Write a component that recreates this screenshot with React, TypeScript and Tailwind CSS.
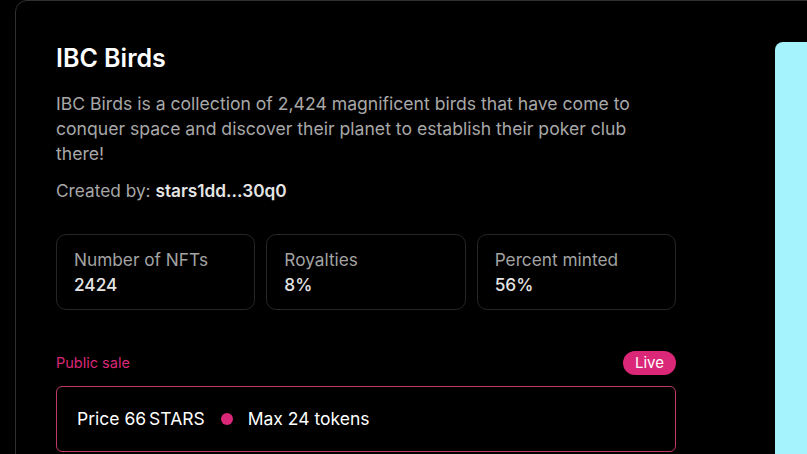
import React from "react";

function Stat({ label, value }: { label: string; value: string }) {
  return (
    <div className="border border-[#262626] rounded-[10px] px-[17px] py-3">
      <div className="text-[17.25px] leading-[25px] text-[#a3a3a3]">{label}</div>
      <div className="text-[17.25px] leading-[25px] font-medium text-[#e5e5e5]">{value}</div>
    </div>
  );
}

export default function App() {
  return (
    <div
      className="w-[807px] h-[454px] overflow-hidden bg-black"
      style={{ fontFamily: "Inter, 'Noto Sans', sans-serif" }}
    >
      <div className="ml-[15px] w-[900px] h-[600px] border border-[#303030] rounded-[12px] pl-10 pt-[41px] flex gap-[99px]">
        <div className="w-[620px] shrink-0">
          <h1 className="text-[25px] leading-8 font-semibold text-white">IBC Birds</h1>
          <p className="mt-[17px] text-[17.6px] leading-[25px] text-[#a8a8a8]">
            IBC Birds is a collection of 2,424 magnificent birds that have come to conquer space and discover their planet to establish their poker club there!
          </p>
          <div className="mt-3 text-[17.25px] leading-[25px] text-[#a8a8a8]">
            Created by: <span className="font-semibold text-[#e5e5e5]">stars1dd...30q0</span>
          </div>
          <div className="mt-[31px] grid grid-cols-3 gap-[11px]">
            <Stat label="Number of NFTs" value="2424" />
            <Stat label="Royalties" value="8%" />
            <Stat label="Percent minted" value="56%" />
          </div>
          <div className="mt-[41px] flex items-center justify-between">
            <span className="text-[14.5px] text-[#db2777]">Public sale</span>
            <span className="h-6 px-[12px] rounded-full bg-[#db2777] text-white text-[15px] leading-6">Live</span>
          </div>
          <div className="mt-[11px] h-[66px] border border-[#c03a69] rounded-md px-5 flex items-center text-[17.5px] text-white">
            <span>Price 66</span>
            <span className="ml-[3px]">STARS</span>
            <span className="ml-4 mr-[15px] w-3 h-3 rounded-full bg-[#db2777]" />
            <span>Max 24 tokens</span>
          </div>
        </div>
        <div className="w-[400px] h-[500px] bg-[#a5f3fc] rounded-lg shrink-0" />
      </div>
    </div>
  );
}
